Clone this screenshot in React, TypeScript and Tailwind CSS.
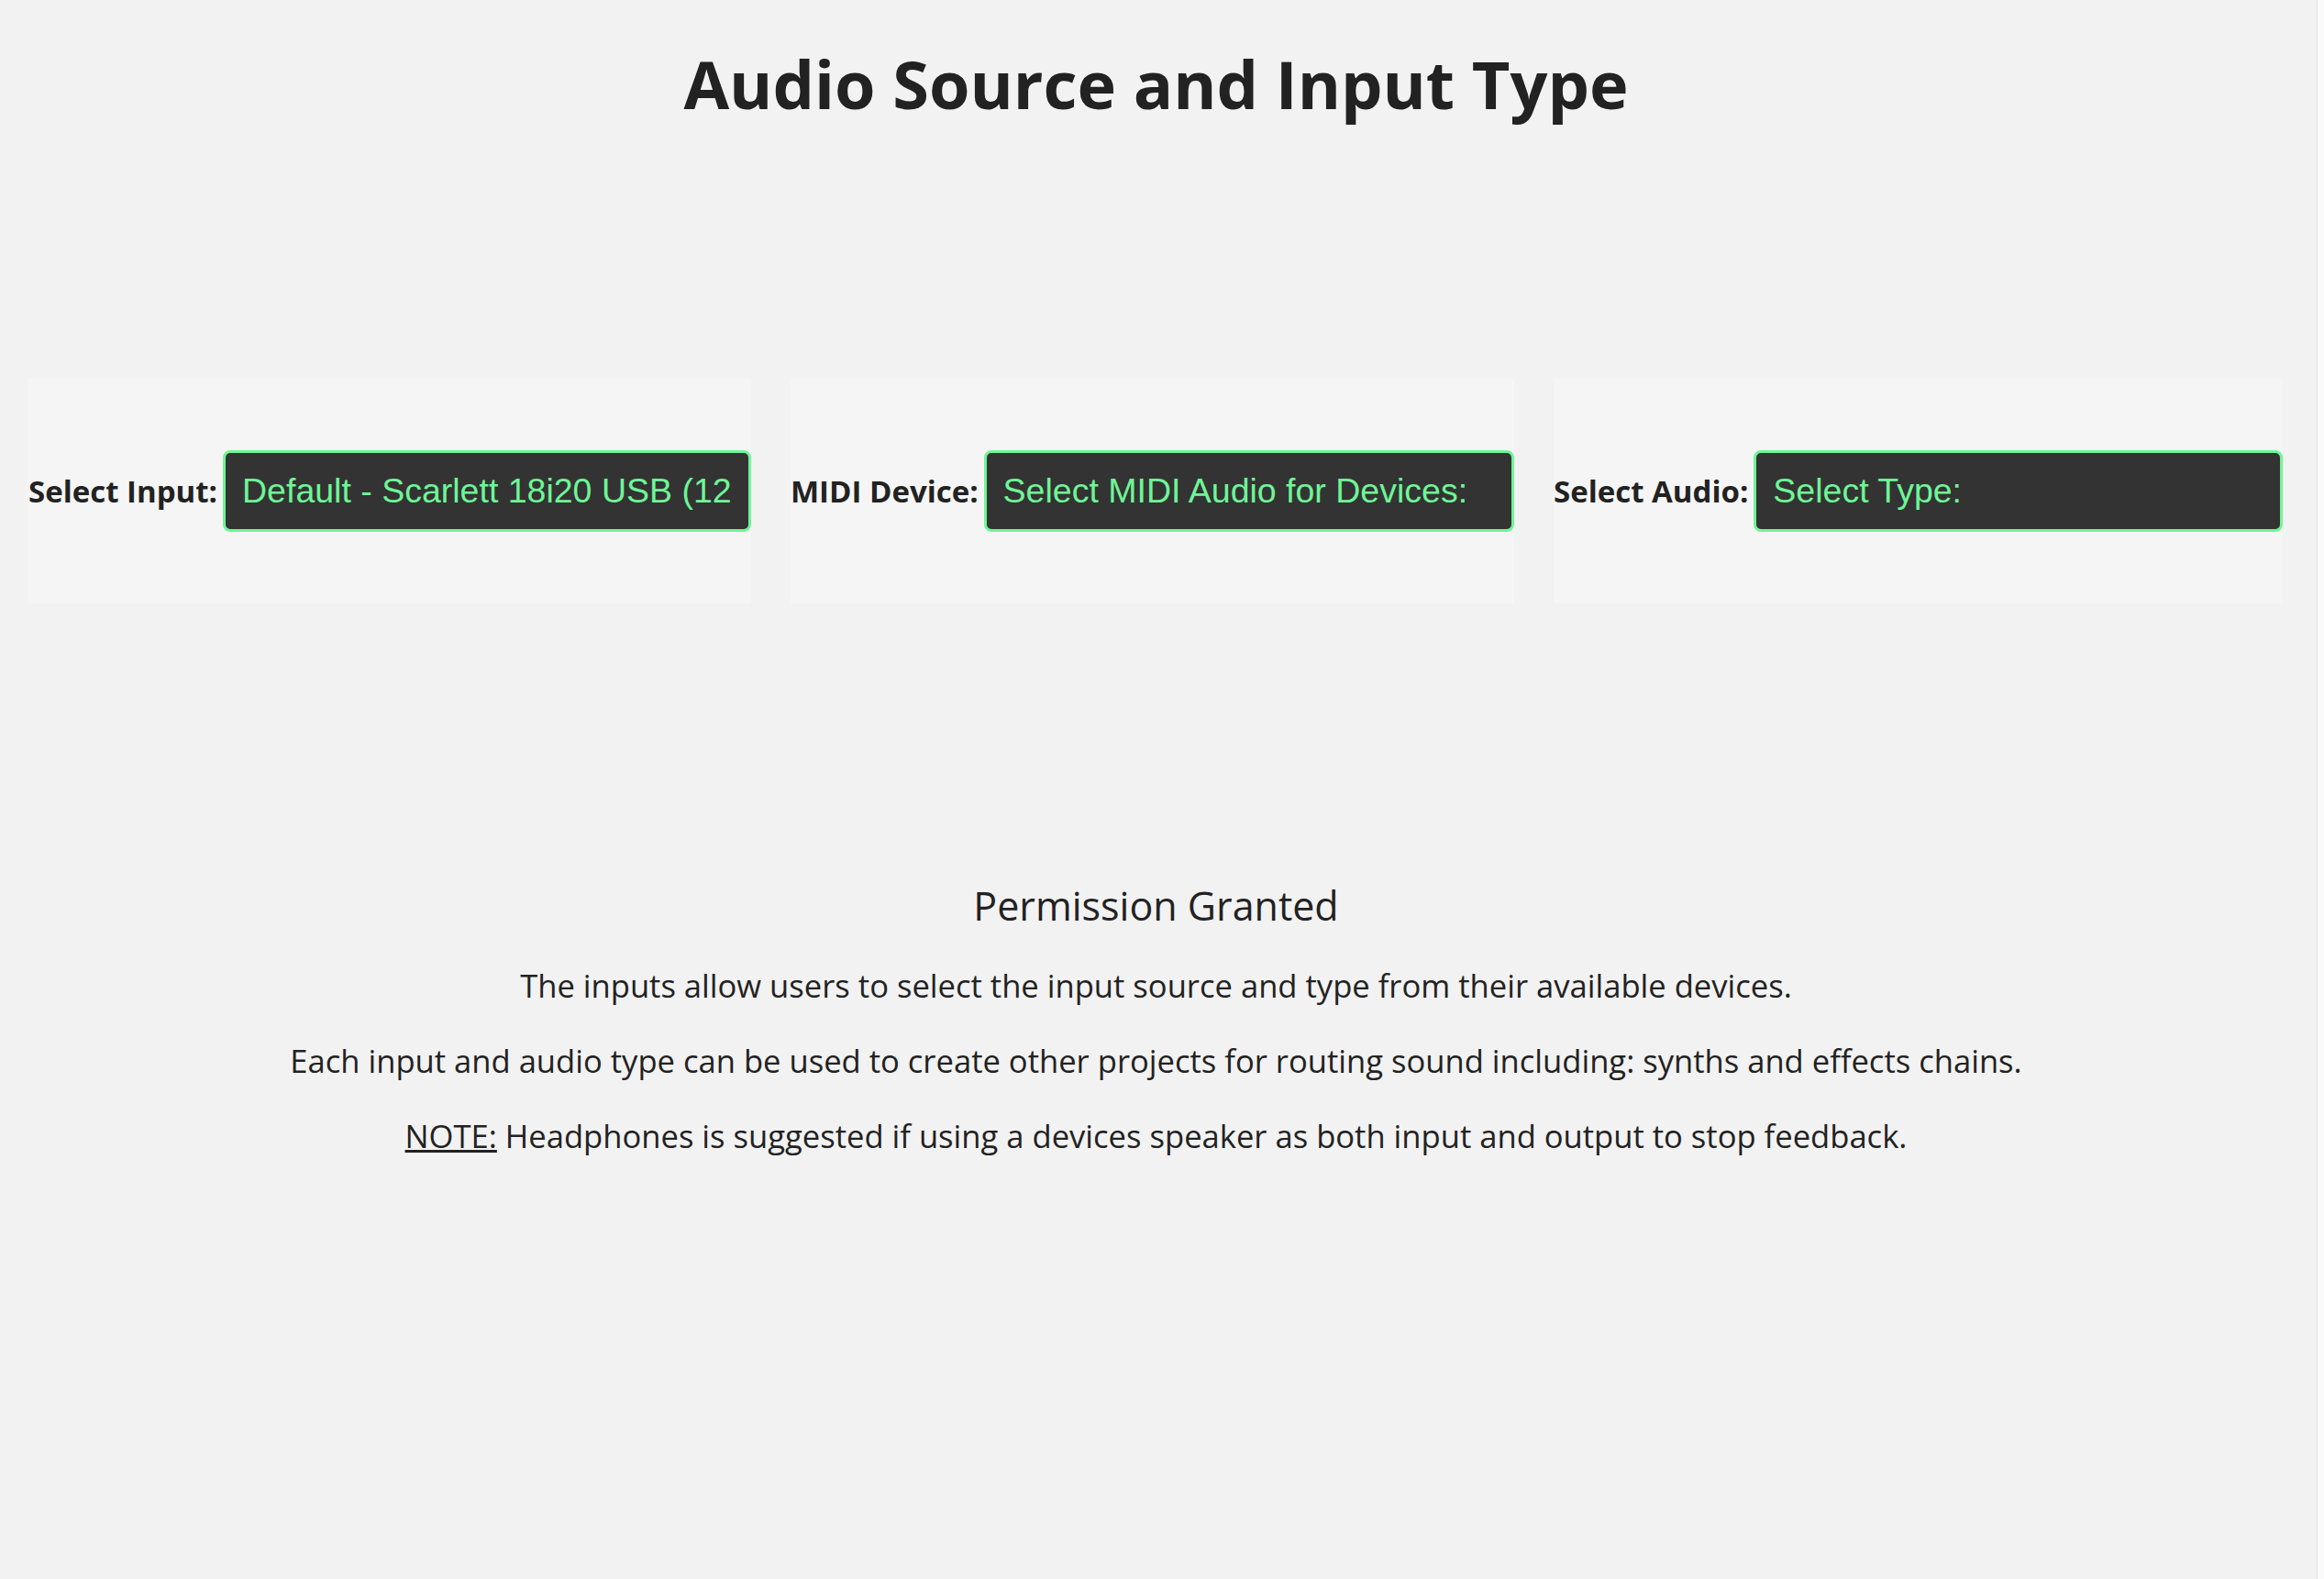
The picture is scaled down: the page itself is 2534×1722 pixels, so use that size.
import * as React from 'react';

const selects = [
  { label: 'Select Input:', value: 'Default - Scarlett 18i20 USB (12' },
  { label: 'MIDI Device:', value: 'Select MIDI Audio for Devices:' },
  { label: 'Select Audio:', value: 'Select Type:' },
];

function SelectPanel({ label, value }: { label: string; value: string }) {
  return (
    <div className="flex h-[245px] items-center gap-[6px] bg-[#f5f5f5]">
      <span className="whitespace-nowrap text-[33px] font-bold text-[#222222]">{label}</span>
      <div className="flex h-[89px] min-w-0 flex-1 items-center overflow-hidden whitespace-nowrap rounded-[8px] border-[3px] border-[#6ff597] bg-[#333333] pl-[18px] pr-[18px] font-['Liberation_Sans',Arial,sans-serif] text-[37.5px] text-[#6ff597]">
        {value}
      </div>
    </div>
  );
}

function App() {
  return (
    <div className="flex min-h-[1722px] bg-[#f2f2f2] font-['Open_Sans',sans-serif] text-[#222222]">
      <main className="flex-1">
        <h1 className="mt-[42px] pr-[5px] text-center text-[72px] font-bold leading-[98px]">Audio Source and Input Type</h1>

        <div className="mt-[273px] grid grid-cols-[788px_789px_795px] gap-x-[43px] pl-[31px]">
          {selects.map((s) => (
            <SelectPanel key={s.label} label={s.label} value={s.value} />
          ))}
        </div>

        <div className="mt-[300px] flex flex-col items-center gap-[32px] pr-[5px] text-center">
          <h3 className="text-[43px] font-normal leading-[60px]">Permission Granted</h3>
          <p className="text-[34.6px] leading-[50px]">
            The inputs allow users to select the input source and type from their available devices.
          </p>
          <p className="text-[34.6px] leading-[50px]">
            Each input and audio type can be used to create other projects for routing sound including: synths and effects chains.
          </p>
          <p className="text-[34.6px] leading-[50px]">
            <span className="underline">NOTE:</span> Headphones is suggested if using a devices speaker as both input and output to stop feedback.
          </p>
        </div>
      </main>
      <div className="w-[8px] border-l border-[#e2e2e2] bg-[#fafafa]" />
    </div>
  );
}

export default App;
